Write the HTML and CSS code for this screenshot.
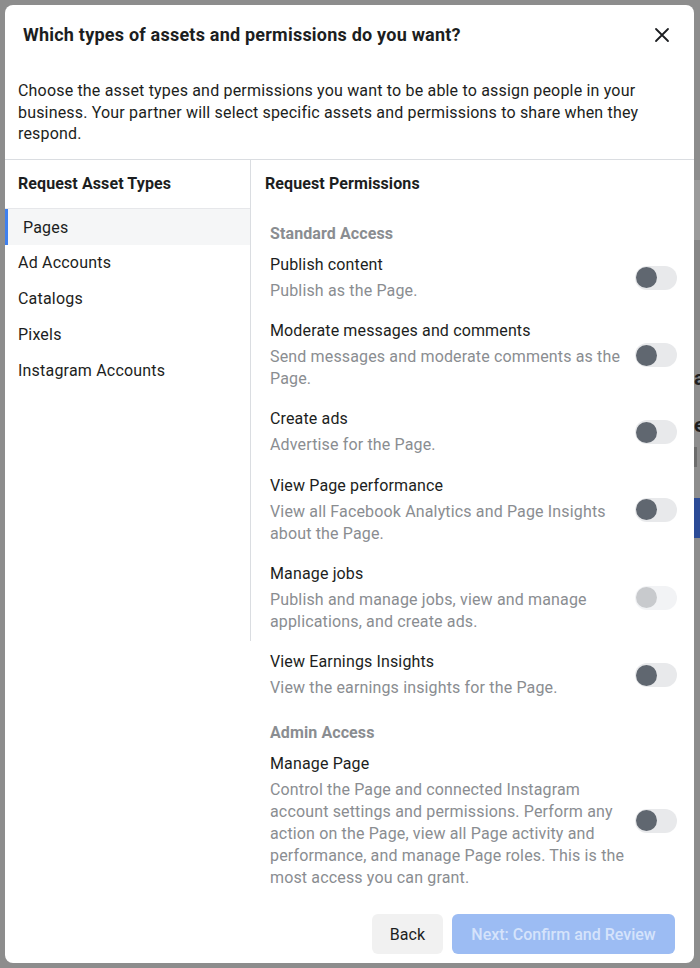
FILE: index.html
```html
<!DOCTYPE html>
<html lang="en">
<head>
<meta charset="utf-8">
<title>Request assets and permissions</title>
<link rel="stylesheet" href="styles.css">
</head>
<body>
<div class="dialog" role="dialog" aria-labelledby="dlg-title">
  <header class="dlg-header">
    <div class="title-row">
      <h1 class="title" id="dlg-title">Which types of assets and permissions do you want?</h1>
      <button class="close" aria-label="Close">
        <svg width="16" height="16" viewBox="0 0 16 16" aria-hidden="true"><path d="M2 2 L14 14 M14 2 L2 14" stroke="#1c1e21" stroke-width="1.8" stroke-linecap="round" fill="none"/></svg>
      </button>
    </div>
    <p class="intro">Choose the asset types and permissions you want to be able to assign people in your business. Your partner will select specific assets and permissions to share when they respond.</p>
  </header>

  <div class="dlg-body">
    <aside class="types">
      <div class="types-head">Request Asset Types</div>
      <div class="type-item active">Pages</div>
      <div class="type-item">Ad Accounts</div>
      <div class="type-item">Catalogs</div>
      <div class="type-item">Pixels</div>
      <div class="type-item">Instagram Accounts</div>
    </aside>

    <section class="perms">
      <div class="perms-head">Request Permissions</div>
      <div class="perm-section">
        <div class="section-label">Standard Access</div>
        <div class="perm">
          <div class="perm-text"><div class="perm-title">Publish content</div><div class="perm-desc">Publish as the Page.</div></div>
          <span class="toggle"><span class="knob"></span></span>
        </div>
        <div class="perm">
          <div class="perm-text"><div class="perm-title">Moderate messages and comments</div><div class="perm-desc">Send messages and moderate comments as the Page.</div></div>
          <span class="toggle"><span class="knob"></span></span>
        </div>
        <div class="perm">
          <div class="perm-text"><div class="perm-title">Create ads</div><div class="perm-desc">Advertise for the Page.</div></div>
          <span class="toggle"><span class="knob"></span></span>
        </div>
        <div class="perm">
          <div class="perm-text"><div class="perm-title">View Page performance</div><div class="perm-desc">View all Facebook Analytics and Page Insights about the Page.</div></div>
          <span class="toggle"><span class="knob"></span></span>
        </div>
        <div class="perm">
          <div class="perm-text"><div class="perm-title">Manage jobs</div><div class="perm-desc">Publish and manage jobs, view and manage applications, and create ads.</div></div>
          <span class="toggle disabled"><span class="knob"></span></span>
        </div>
        <div class="perm">
          <div class="perm-text"><div class="perm-title">View Earnings Insights</div><div class="perm-desc">View the earnings insights for the Page.</div></div>
          <span class="toggle"><span class="knob"></span></span>
        </div>
      </div>
      <div class="perm-section">
        <div class="section-label">Admin Access</div>
        <div class="perm">
          <div class="perm-text"><div class="perm-title">Manage Page</div><div class="perm-desc">Control the Page and connected Instagram account settings and permissions. Perform any action on the Page, view all Page activity and performance, and manage Page roles. This is the most access you can grant.</div></div>
          <span class="toggle"><span class="knob"></span></span>
        </div>
      </div>
    </section>
  </div>

  <footer class="dlg-footer">
    <button class="btn btn-back">Back</button>
    <button class="btn btn-next" disabled>Next: Confirm and Review</button>
  </footer>
</div>

<div class="behind" aria-hidden="true">
  <div class="behind-hero"></div>
  <div class="behind-title">a</div>
  <div class="behind-sub">e</div>
  <div class="behind-meta"></div>
  <div class="behind-btn"></div>
</div>
</body>
</html>
```

FILE: styles.css
```css
* { box-sizing: border-box; }

html, body {
  margin: 0;
  height: 968px;
  overflow: hidden;
}

body {
  display: flex;
  align-items: flex-start;
  background: #8d8d8d;
  font-family: Roboto, "Liberation Sans", Arial, sans-serif;
  color: #1c1e21;
}

.dialog {
  flex: none;
  width: 689px;
  height: 958px;
  margin: 5px 0 0 5px;
  background: #fff;
  border-radius: 8px;
  overflow: hidden;
  display: flex;
  flex-direction: column;
}

/* Header */
.dlg-header {
  padding: 18px 0 14px 13px;
  border-bottom: 1px solid #dadde1;
}

.title-row {
  display: flex;
  align-items: center;
  justify-content: space-between;
  padding: 0 20px 0 5px;
  height: 24px;
}

.title {
  margin: 0;
  font-size: 18px;
  font-weight: 700;
  line-height: 24px;
  letter-spacing: 0.22px;
  color: #1c1e21;
}

.close {
  width: 24px;
  height: 24px;
  padding: 0;
  border: 0;
  background: none;
  display: flex;
  align-items: center;
  justify-content: center;
}

.intro {
  margin: 33px 0 0;
  padding-right: 13px;
  font-size: 16px;
  line-height: 21.5px;
  letter-spacing: 0.18px;
  color: #1c1e21;
}

/* Body */
.dlg-body {
  flex: 1;
  min-height: 0;
  display: flex;
  align-items: flex-start;
  overflow: hidden;
}

.types {
  flex: none;
  width: 246px;
  height: 481px;
  border-right: 1px solid #dadde1;
}

.types-head {
  height: 49px;
  padding-left: 13px;
  line-height: 48px;
  font-size: 16px;
  font-weight: 700;
  letter-spacing: 0.1px;
  border-bottom: 1px solid #e6e7ea;
}

.type-item {
  height: 36px;
  line-height: 36px;
  padding-left: 13px;
  font-size: 16px;
  letter-spacing: 0.2px;
}

.type-item.active {
  background: #f5f6f7;
  border-left: 3px solid #3f80ee;
  padding-left: 15px;
  line-height: 38px;
}

.perms {
  flex: 1;
  padding: 0 17px 0 14px;
}

.perms-head {
  height: 48px;
  line-height: 48px;
  font-size: 16px;
  font-weight: 700;
  letter-spacing: 0.1px;
}

.perm-section {
  display: flex;
  flex-direction: column;
  gap: 18.3px;
  padding-left: 5px;
  margin-top: 15px;
}

.perm-section + .perm-section {
  margin-top: 23px;
}

.section-label {
  font-size: 16px;
  font-weight: 700;
  line-height: 22px;
  color: #8a8d91;
  letter-spacing: 0.1px;
  margin-bottom: -9px;
}

.perm-section + .perm-section .section-label {
  margin-bottom: -10px;
}

.perm {
  display: flex;
  align-items: center;
}

.perm-text {
  flex: 1;
  min-width: 0;
}

.perm-title {
  font-size: 16px;
  line-height: 22px;
  letter-spacing: 0.14px;
  color: #1c1e21;
}

.perm-desc {
  margin-top: 4px;
  font-size: 16px;
  line-height: 22px;
  letter-spacing: 0.15px;
  color: #8a8d91;
}

.toggle {
  flex: none;
  width: 42px;
  height: 24px;
  margin-left: 10px;
  border-radius: 12px;
  background: #e8e9eb;
  display: flex;
  align-items: center;
  padding-left: 1px;
}

.knob {
  width: 21px;
  height: 21px;
  border-radius: 50%;
  background: #606770;
}

.toggle.disabled { background: #f2f3f5; }
.toggle.disabled .knob { background: #c8cacd; }

/* Footer */
.dlg-footer {
  flex: none;
  display: flex;
  justify-content: flex-end;
  gap: 9px;
  padding: 8px 19px 9px 0;
}

.btn {
  height: 40px;
  padding: 0 18px;
  border: 0;
  border-radius: 6px;
  font-family: Roboto, "Liberation Sans", Arial, sans-serif;
  font-size: 16px;
  font-weight: 500;
}

.btn-back {
  background: #f1f1f1;
  color: #1c1e21;
  font-weight: 400;
}

.btn-next {
  width: 223px;
  background: #9cbcf3;
  color: #d5e3fb;
}

/* Page behind the overlay */
.behind {
  flex: 1;
  min-width: 0;
  height: 968px;
  overflow: hidden;
  padding-top: 180px;
  display: flex;
  flex-direction: column;
}

.behind-hero {
  height: 150px;
  background: linear-gradient(#9b9b9b 0 40%, #878787 40% 100%);
}

.behind-title {
  margin-top: 36px;
  font-size: 20px;
  font-weight: 700;
  line-height: 24px;
  color: #1e1e1e;
}

.behind-sub {
  margin-top: 23px;
  font-size: 20px;
  font-weight: 700;
  line-height: 24px;
  color: #1e1e1e;
}

.behind-meta {
  margin-top: 10px;
  height: 20px;
  width: 3px;
  background: #6c6c6c;
}

.behind-btn {
  margin-top: 31px;
  height: 40px;
  background: #2b4b96;
}
```
